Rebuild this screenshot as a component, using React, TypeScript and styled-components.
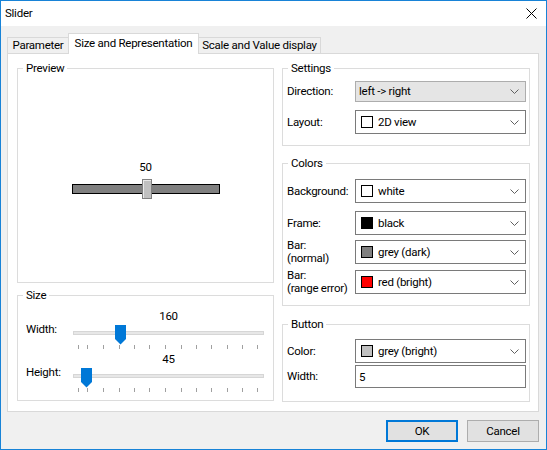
import { createGlobalStyle, styled } from "styled-components";

const GlobalStyle = createGlobalStyle`
  *, *::before, *::after {
    box-sizing: border-box;
  }

  html, body {
    margin: 0;
    padding: 0;
    background: #ffffff;
  }

  body {
    font-family: Roboto, "Liberation Sans", sans-serif;
    font-size: 11.5px;
    letter-spacing: -0.25px;
    color: #000000;
  }
`;

const WindowStyle = styled.div`
  width: 547px;
  height: 450px;
  border: 1px solid #1883d7;
  background-color: #f0f0f0;
  display: flex;
  flex-direction: column;
`;

const TitleBarStyle = styled.div`
  height: 25px;
  background-color: #ffffff;
  display: flex;
  align-items: center;
  justify-content: space-between;
  padding: 0 9px 0 4px;
  line-height: 15px;
`;

const BodyStyle = styled.div`
  flex: 1;
  display: flex;
  flex-direction: column;
  padding: 7px 7px 0 6px;
`;

const TabRowStyle = styled.div`
  height: 20px;
  display: flex;
  align-items: flex-end;
`;

const TabStyle = styled.div<{ $w: number; $active?: boolean }>`
  width: ${(p) => p.$w}px;
  height: ${(p) => (p.$active ? 21 : 16)}px;
  margin-right: -1px;
  margin-bottom: ${(p) => (p.$active ? -1 : 0)}px;
  position: relative;
  z-index: ${(p) => (p.$active ? 2 : 1)};
  border: 1px solid #d9d9d9;
  border-bottom: none;
  background-color: ${(p) => (p.$active ? "#ffffff" : "#f0f0f0")};
  display: flex;
  justify-content: center;
  align-items: ${(p) => (p.$active ? "flex-start" : "center")};
  padding-top: ${(p) => (p.$active ? 2 : 0)}px;
  line-height: 15px;
  white-space: nowrap;
`;

const PanelStyle = styled.div`
  height: 359px;
  background-color: #ffffff;
  border: 1px solid #d9d9d9;
  display: grid;
  grid-template-columns: 257px 248px;
  column-gap: 8px;
  padding: 7px 8px 0 9px;
`;

const ColumnStyle = styled.div`
  display: flex;
  flex-direction: column;
`;

const GroupStyle = styled.fieldset<{ $h: number; $mt?: number }>`
  height: ${(p) => p.$h}px;
  margin: ${(p) => p.$mt ?? 0}px 0 0 0;
  padding: 0;
  min-width: 0;
  border: 1px solid #dcdcdc;
  background-color: #ffffff;

  & > legend {
    margin-left: 5px;
    padding: 0 3px;
    line-height: 15px;
  }
`;

/* preview */

const PreviewBodyStyle = styled.div`
  height: 206px;
  display: flex;
  flex-direction: column;
  align-items: center;
  justify-content: center;
`;

const PreviewValueStyle = styled.div`
  line-height: 15px;
  margin-bottom: 4px;
`;

const PreviewTrackStyle = styled.div`
  width: 148px;
  height: 20px;
  position: relative;
  display: flex;
  align-items: center;
`;

const PreviewBarStyle = styled.div`
  width: 100%;
  height: 10px;
  background-color: #808080;
  border: 1px solid #000000;
`;

const PreviewThumbStyle = styled.div`
  position: absolute;
  left: 70px;
  top: 0;
  width: 10px;
  height: 20px;
  background-color: #c0c0c0;
  border: 1px solid #808080;
  box-shadow: inset 1px 1px 0 #e8e8e8;
`;

/* size trackbars */

const SizeBodyStyle = styled.div`
  padding: 6px 9px 0 8px;
  display: flex;
  flex-direction: column;
  gap: 2px;
`;

const SizeRowStyle = styled.div`
  display: grid;
  grid-template-columns: 47px 191px;
  height: 41px;
`;

const SizeLabelStyle = styled.div`
  line-height: 15px;
  margin-top: 13px;
`;

const TrackbarStyle = styled.div`
  display: flex;
  flex-direction: column;
`;

const TrackValueStyle = styled.div`
  line-height: 15px;
  height: 16px;
  text-align: center;
`;

const TrackAreaStyle = styled.div`
  position: relative;
  height: 25px;
`;

const TrackLineStyle = styled.div`
  position: absolute;
  left: 0;
  right: 0;
  top: 6px;
  height: 4px;
  background-color: #e7e7e7;
  border: 1px solid #d6d6d6;
`;

const TickStyle = styled.div`
  position: absolute;
  top: 20px;
  width: 1px;
  height: 4px;
  background-color: #a0a0a0;
`;

const ThumbStyle = styled.svg`
  position: absolute;
  top: 0;
`;

/* form rows */

const FormBodyStyle = styled.div`
  padding: 0 3px 0 4px;
  display: flex;
  flex-direction: column;
`;

const FormRowStyle = styled.div<{ $mt: number }>`
  display: grid;
  grid-template-columns: 68px 171px;
  align-items: center;
  margin-top: ${(p) => p.$mt}px;
`;

const FieldLabelStyle = styled.div`
  line-height: 13px;
`;

const ComboStyle = styled.div<{ $plain?: boolean }>`
  height: ${(p) => (p.$plain ? 21 : 24)}px;
  border: 1px solid ${(p) => (p.$plain ? "#adadad" : "#7a7a7a")};
  background-color: ${(p) => (p.$plain ? "#e5e5e5" : "#ffffff")};
  display: flex;
  align-items: center;
  padding: 0 6px 0 ${(p) => (p.$plain ? 3 : 5)}px;
  line-height: 15px;
`;

const ComboTextStyle = styled.span`
  flex: 1;
  white-space: nowrap;
`;

const SwatchStyle = styled.span<{ $color: string }>`
  width: 12px;
  height: 12px;
  border: 1px solid #000000;
  background-color: ${(p) => p.$color};
  margin-right: 5px;
  flex-shrink: 0;
`;

const TextInputStyle = styled.input`
  height: 23px;
  width: 100%;
  border: 1px solid #7a7a7a;
  background-color: #ffffff;
  padding: 0 3px;
  font: inherit;
  letter-spacing: inherit;
  color: #000000;
  outline: none;
`;

/* footer */

const FooterStyle = styled.div`
  display: flex;
  justify-content: flex-end;
  gap: 9px;
  padding-top: 8px;
`;

const ButtonStyle = styled.button<{ $default?: boolean }>`
  width: 72px;
  height: 22px;
  font: inherit;
  letter-spacing: inherit;
  color: #000000;
  background-color: #e1e1e1;
  border: ${(p) => (p.$default ? "2px solid #0078d7" : "1px solid #adadad")};
  padding: 0;
`;

const Chevron = () => (
  <svg width="9" height="5" viewBox="0 0 9 5">
    <polyline points="0.5,0.5 4.5,4.5 8.5,0.5" fill="none" stroke="#606060" strokeWidth="1" />
  </svg>
);

const CloseIcon = () => (
  <svg width="11" height="11" viewBox="0 0 11 11">
    <path d="M0.5 0.5 L10.5 10.5 M10.5 0.5 L0.5 10.5" stroke="#000000" strokeWidth="1" />
  </svg>
);

const ticks = [5, 14, 30, 46, 61, 76, 92, 108, 123, 138, 154, 169, 184];

const Trackbar = ({ value, thumb }: { value: string; thumb: number }) => (
  <TrackbarStyle>
    <TrackValueStyle>{value}</TrackValueStyle>
    <TrackAreaStyle>
      <TrackLineStyle />
      {ticks.map((t) => (
        <TickStyle key={t} style={{ left: t }} />
      ))}
      <ThumbStyle width="11" height="20" viewBox="0 0 11 20" style={{ left: thumb }}>
        <polygon points="0,0 11,0 11,14 5.5,19.5 0,14" fill="#0078d7" />
      </ThumbStyle>
    </TrackAreaStyle>
  </TrackbarStyle>
);

const ColorCombo = ({ color, text }: { color: string; text: string }) => (
  <ComboStyle>
    <SwatchStyle $color={color} />
    <ComboTextStyle>{text}</ComboTextStyle>
    <Chevron />
  </ComboStyle>
);

const App = () => {
  return (
    <>
      <GlobalStyle />
      <WindowStyle>
        <TitleBarStyle>
          <span>Slider</span>
          <CloseIcon />
        </TitleBarStyle>
        <BodyStyle>
          <TabRowStyle>
            <TabStyle $w={62}>Parameter</TabStyle>
            <TabStyle $w={131} $active>
              Size and Representation
            </TabStyle>
            <TabStyle $w={123}>Scale and Value display</TabStyle>
          </TabRowStyle>
          <PanelStyle>
            <ColumnStyle>
              <GroupStyle $h={222}>
                <legend>Preview</legend>
                <PreviewBodyStyle>
                  <PreviewValueStyle>50</PreviewValueStyle>
                  <PreviewTrackStyle>
                    <PreviewBarStyle />
                    <PreviewThumbStyle />
                  </PreviewTrackStyle>
                </PreviewBodyStyle>
              </GroupStyle>
              <GroupStyle $h={113} $mt={5}>
                <legend>Size</legend>
                <SizeBodyStyle>
                  <SizeRowStyle>
                    <SizeLabelStyle>Width:</SizeLabelStyle>
                    <Trackbar value="160" thumb={42} />
                  </SizeRowStyle>
                  <SizeRowStyle>
                    <SizeLabelStyle>Height:</SizeLabelStyle>
                    <Trackbar value="45" thumb={8} />
                  </SizeRowStyle>
                </SizeBodyStyle>
              </GroupStyle>
            </ColumnStyle>
            <ColumnStyle>
              <GroupStyle $h={85}>
                <legend>Settings</legend>
                <FormBodyStyle>
                  <FormRowStyle $mt={5}>
                    <FieldLabelStyle>Direction:</FieldLabelStyle>
                    <ComboStyle $plain>
                      <ComboTextStyle>left -&gt; right</ComboTextStyle>
                      <Chevron />
                    </ComboStyle>
                  </FormRowStyle>
                  <FormRowStyle $mt={8}>
                    <FieldLabelStyle>Layout:</FieldLabelStyle>
                    <ColorCombo color="#ffffff" text="2D view" />
                  </FormRowStyle>
                </FormBodyStyle>
              </GroupStyle>
              <GroupStyle $h={150} $mt={10}>
                <legend>Colors</legend>
                <FormBodyStyle>
                  <FormRowStyle $mt={8}>
                    <FieldLabelStyle>Background:</FieldLabelStyle>
                    <ColorCombo color="#ffffff" text="white" />
                  </FormRowStyle>
                  <FormRowStyle $mt={8}>
                    <FieldLabelStyle>Frame:</FieldLabelStyle>
                    <ColorCombo color="#000000" text="black" />
                  </FormRowStyle>
                  <FormRowStyle $mt={4}>
                    <FieldLabelStyle>
                      Bar:
                      <br />
                      (normal)
                    </FieldLabelStyle>
                    <ColorCombo color="#808080" text="grey (dark)" />
                  </FormRowStyle>
                  <FormRowStyle $mt={4}>
                    <FieldLabelStyle>
                      Bar:
                      <br />
                      (range error)
                    </FieldLabelStyle>
                    <ColorCombo color="#ff0000" text="red (bright)" />
                  </FormRowStyle>
                </FormBodyStyle>
              </GroupStyle>
              <GroupStyle $h={85} $mt={11}>
                <legend>Button</legend>
                <FormBodyStyle>
                  <FormRowStyle $mt={7}>
                    <FieldLabelStyle>Color:</FieldLabelStyle>
                    <ColorCombo color="#c0c0c0" text="grey (bright)" />
                  </FormRowStyle>
                  <FormRowStyle $mt={2}>
                    <FieldLabelStyle>Width:</FieldLabelStyle>
                    <TextInputStyle defaultValue="5" />
                  </FormRowStyle>
                </FormBodyStyle>
              </GroupStyle>
            </ColumnStyle>
          </PanelStyle>
          <FooterStyle>
            <ButtonStyle $default>OK</ButtonStyle>
            <ButtonStyle>Cancel</ButtonStyle>
          </FooterStyle>
        </BodyStyle>
      </WindowStyle>
    </>
  );
};

export default App;
